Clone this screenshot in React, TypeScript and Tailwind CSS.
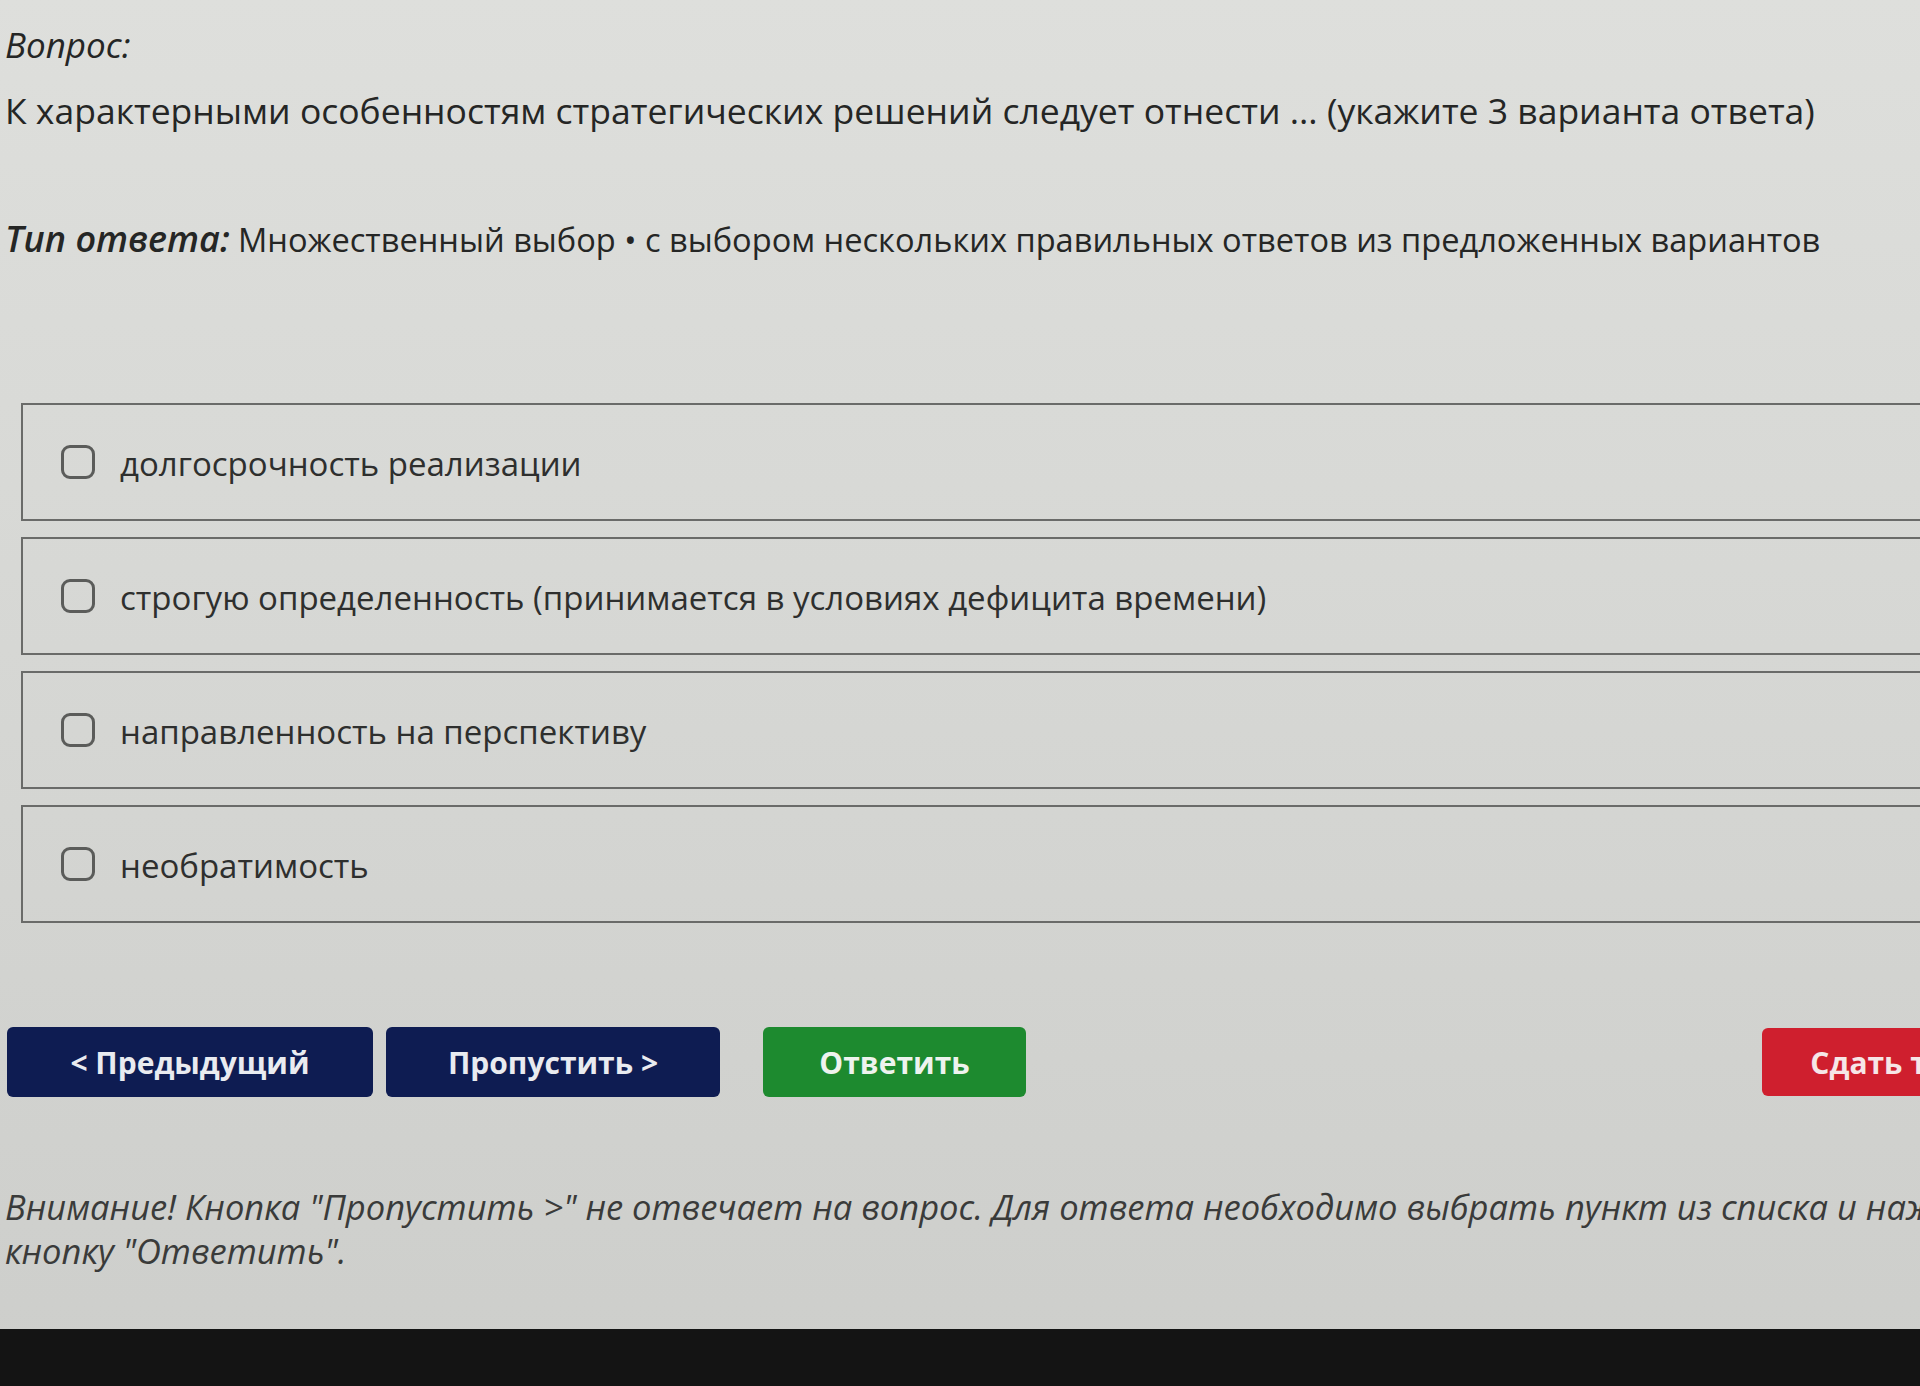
import React from 'react';

const options = [
  'долгосрочность реализации',
  'строгую определенность (принимается в условиях дефицита времени)',
  'направленность на перспективу',
  'необратимость',
];

const OptionRow: React.FC<{ label: string }> = ({ label }) => (
  <label className="flex h-[118px] items-center border-2 border-[#6a6b69] pl-[38px]">
    <span className="h-[34px] w-[34px] shrink-0 rounded-[9px] border-[3px] border-[#5b5c5a]" />
    <span className="ml-[25px] pt-[4px] text-[33px] text-[#2e2f2e]">{label}</span>
  </label>
);

export default function App() {
  return (
    <div
      className="flex h-[1386px] w-full flex-col overflow-hidden bg-linear-to-b from-[#dedfdc] to-[#cdcecb]"
      style={{ fontFamily: '"Open Sans", "Noto Sans", sans-serif' }}
    >
      <div className="h-[1329px] w-[2035px] shrink-0 pl-[5px] pt-[25px] text-[#252625]">
        {/* Question */}
        <p className="text-[35px] leading-[40px] font-medium italic">Вопрос:</p>
        <p className="mt-[23px] text-[35.5px] leading-[44px]">
          К характерными особенностям стратегических решений следует отнести ... (укажите 3 варианта ответа)
        </p>
        <p className="mt-[85px] text-[32.6px] leading-[44px]">
          <span className="text-[36px] font-semibold italic">Тип ответа:</span> Множественный выбор • с выбором нескольких
          правильных ответов из предложенных вариантов
        </p>

        {/* Options */}
        <div className="ml-4 mt-[141px] flex flex-col gap-4">
          {options.map((o) => (
            <OptionRow key={o} label={o} />
          ))}
        </div>

        {/* Buttons */}
        <div className="mt-[104px] flex items-center pl-[2px] pr-[10px]">
          <button className="h-[70px] w-[366px] rounded-md bg-[#0e1c52] text-[30px] font-bold text-[#e9ebf0]">
            &lt; Предыдущий
          </button>
          <button className="ml-[13px] h-[70px] w-[334px] rounded-md bg-[#0e1c52] text-[30px] font-bold text-[#e9ebf0]">
            Пропустить &gt;
          </button>
          <button className="ml-[43px] h-[70px] w-[263px] rounded-md bg-[#1d8a2f] text-[30px] font-bold text-[#eef3ee]">
            Ответить
          </button>
          <button className="ml-auto h-[68px] w-[263px] rounded-md bg-[#cf1f2e] text-[30px] font-bold text-[#f6e6e7]">
            Сдать тест
          </button>
        </div>

        {/* Warning */}
        <p className="mt-[88px] whitespace-nowrap text-[34.5px] leading-[44px] text-[#3a3b3a] italic">
          Внимание! Кнопка "Пропустить &gt;" не отвечает на вопрос. Для ответа необходимо выбрать пункт из списка и нажать на
          <br />
          кнопку "Ответить".
        </p>
      </div>
      <div className="flex-1 bg-[#141414]" />
    </div>
  );
}
